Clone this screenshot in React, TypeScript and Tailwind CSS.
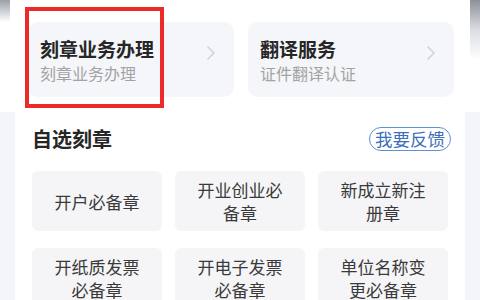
const font = { fontFamily: '"Noto Sans CJK SC", "Noto Sans", sans-serif' };

function ServiceCard({ title, sub }: { title: string; sub: string }) {
  return (
    <div className="flex h-[75px] flex-1 items-center justify-between rounded-[10px] bg-[#f4f6fa] pl-[12px] pr-[18px]">
      <div className="flex flex-col">
        <span className="text-[19px] font-bold leading-[26px] text-[#262626]">{title}</span>
        <span className="text-[16px] leading-[22px] text-[#a3a3a3]">{sub}</span>
      </div>
      <svg width="10" height="16" viewBox="0 0 10 16" className="mb-[14px]">
        <path d="M2 2l6 6-6 6" fill="none" stroke="#cfd3da" strokeWidth="1.6" strokeLinecap="round" strokeLinejoin="round" />
      </svg>
    </div>
  );
}

const tiles = [
  ['开户必备章'],
  ['开业创业必', '备章'],
  ['新成立新注', '册章'],
  ['开纸质发票', '必备章'],
  ['开电子发票', '必备章'],
  ['单位名称变', '更必备章'],
];

export default function App() {
  return (
    <div className="h-[300px] w-[480px] overflow-hidden bg-[#f4f5f8]" style={font}>
      <div className="flex h-[112px] bg-white">
        <div className="h-[22px] w-[10px] bg-gradient-to-b from-[#9ca0a8] to-white" />
        <div className="flex flex-1 gap-[14px] pl-[18px] pr-[16px] pt-[22px]">
          <div className="relative flex flex-1">
            <ServiceCard title="刻章业务办理" sub="刻章业务办理" />
            <div className="absolute left-[-3px] top-[-15px] h-[101px] w-[139px] border-[4px] border-[#ec2a2a]" />
          </div>
          <div className="flex flex-1">
            <ServiceCard title="翻译服务" sub="证件翻译认证" />
          </div>
        </div>
        <div className="h-[60px] w-[10px] bg-gradient-to-b from-[#8d919a] via-[#dcdee2] to-white" />
      </div>
      <div className="mx-[15px] h-[188px] bg-white px-[17px] pt-[14px]">
        <div className="flex items-center justify-between">
          <span className="text-[20px] font-bold leading-[26px] text-[#262626]">自选刻章</span>
          <span className="mr-[-3px] rounded-full border-[1.5px] border-[#5e90d2] px-[5px] text-[17.5px] leading-[22px] text-[#3b6fb9]">
            我要反馈
          </span>
        </div>
        <div className="mt-[19px] grid grid-cols-3 gap-x-[13px] gap-y-[17px]">
          {tiles.map((t) => (
            <div
              key={t.join('')}
              className="flex h-[60px] flex-col items-center justify-center rounded-[6px] bg-[#f5f5f7] text-[17px] leading-[23px] text-[#3a3a3a]"
            >
              {t.map((line) => (
                <span key={line}>{line}</span>
              ))}
            </div>
          ))}
        </div>
      </div>
    </div>
  );
}
